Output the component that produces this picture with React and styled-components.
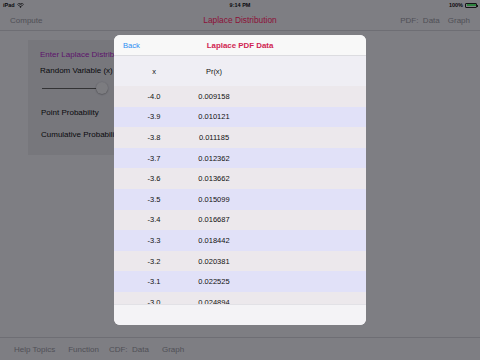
import React from "react";
import styled, { createGlobalStyle } from "styled-components";

const GlobalStyle = createGlobalStyle`
  html, body {
    margin: 0;
    padding: 0;
    background: #d2d2d8;
  }
  body {
    font-family: "Liberation Sans", Arial, sans-serif;
    -webkit-font-smoothing: antialiased;
  }
`;

const Screen = styled.div`
  position: relative;
  width: 480px;
  height: 360px;
  overflow: hidden;
  display: flex;
  flex-direction: column;
  background: #d2d2d8;
  color: #111;
`;

const StatusBar = styled.div`
  height: 10px;
  display: grid;
  grid-template-columns: 1fr auto 1fr;
  align-items: center;
  padding: 0 3px;
  font-size: 5.5px;
  font-weight: bold;
  .left { display: flex; align-items: center; gap: 2px; }
  .right { display: flex; align-items: center; justify-content: flex-end; gap: 2px; }
`;

const Battery = styled.span`
  display: inline-block;
  width: 12px;
  height: 5px;
  border: 0.6px solid #222;
  border-radius: 1px;
  padding: 0.5px;
  box-sizing: border-box;
  position: relative;
  &::before {
    content: "";
    display: block;
    width: 100%;
    height: 100%;
    background: #4cd964;
  }
  &::after {
    content: "";
    position: absolute;
    right: -2px;
    top: 1.2px;
    width: 1px;
    height: 2px;
    background: #222;
  }
`;

const NavBar = styled.div`
  height: 20px;
  display: grid;
  grid-template-columns: 1fr auto 1fr;
  align-items: center;
  padding: 0 10px;
  border-bottom: 1px solid #b8b8be;
  font-size: 8px;
  .left { color: #86868d; }
  .title { color: #e81c5a; font-size: 8.4px; }
  .right { display: flex; justify-content: flex-end; gap: 8px; color: #86868d; }
`;

const Content = styled.div`
  flex: 1;
  padding: 9px 0 0 28px;
`;

const Panel = styled.div`
  width: 200px;
  height: 115px;
  background: #c6c6cc;
  padding: 10px 12px;
  box-sizing: border-box;
  font-size: 8px;
`;

const Prompt = styled.div`
  color: #9c27b0;
  margin-bottom: 7px;
`;

const Label = styled.div`
  color: #111;
  margin: ${(p) => p.$m || "0"};
`;

const Slider = styled.div`
  position: relative;
  width: 66px;
  height: 12px;
  margin: 7px 0 14px 2px;
  &::before {
    content: "";
    position: absolute;
    left: 0;
    right: 6px;
    top: 5.5px;
    height: 1px;
    background: #555;
  }
`;

const Thumb = styled.span`
  position: absolute;
  left: 54px;
  top: 0;
  width: 12px;
  height: 12px;
  border-radius: 50%;
  background: #cfcfd3;
  box-shadow: 0 0.5px 1.5px rgba(0, 0, 0, 0.4);
`;

const Toolbar = styled.div`
  height: 22px;
  border-top: 1px solid #b8b8be;
  display: flex;
  align-items: center;
  padding: 0 14px;
  font-size: 8px;
  color: #86868d;
`;

const ToolItem = styled.span`
  margin-right: ${(p) => p.$gap || 0}px;
  white-space: nowrap;
`;

const Overlay = styled.div`
  position: absolute;
  inset: 0;
  background: rgba(0, 0, 5, 0.4);
`;

const Modal = styled.div`
  position: absolute;
  left: 114px;
  top: 35px;
  width: 252px;
  height: 290px;
  border-radius: 6px;
  overflow: hidden;
  background: #f4f3f6;
  display: flex;
  flex-direction: column;
`;

const ModalHeader = styled.div`
  height: 20px;
  display: grid;
  grid-template-columns: 1fr auto 1fr;
  align-items: center;
  padding: 0 9px;
  background: #f8f8f8;
  border-bottom: 1px solid #dcdce0;
  .back { color: #2a8cf2; font-size: 7.6px; }
  .title { color: #d01f52; font-size: 7.9px; font-weight: bold; }
`;

const Grid = styled.div`
  display: grid;
  grid-template-columns: 80px 40px;
  align-items: center;
  flex: none;
  height: ${(p) => p.$h}px;
  background: ${(p) => p.$bg};
  font-size: 7.5px;
  color: #111;
  span { text-align: center; white-space: nowrap; }
`;

const Rows = styled.div`
  height: 218px;
  overflow: hidden;
  flex: none;
`;

const Footer = styled.div`
  flex: 1;
  background: #f4f3f6;
  border-top: 1px solid #e2e1e6;
`;

const Wifi = () => (
  <svg width="7" height="5" viewBox="0 0 14 10">
    <path d="M7 10 L4.5 7.2 A3.6 3.6 0 0 1 9.5 7.2 Z" fill="#222" />
    <path d="M2.6 5.2 A6.4 6.4 0 0 1 11.4 5.2" stroke="#222" strokeWidth="1.6" fill="none" />
    <path d="M0.6 3 A9.2 9.2 0 0 1 13.4 3" stroke="#222" strokeWidth="1.6" fill="none" />
  </svg>
);

const data = [];
for (let i = 0; i < 14; i++) {
  const x = -4 + i * 0.1;
  data.push({ x: x.toFixed(1), p: (0.5 * Math.exp(-Math.abs(x))).toFixed(6) });
}

export default function App() {
  return (
    <Screen>
      <GlobalStyle />
      <StatusBar>
        <span className="left">iPad <Wifi /></span>
        <span>9:14 PM</span>
        <span className="right">100% <Battery /></span>
      </StatusBar>
      <NavBar>
        <span className="left">Compute</span>
        <span className="title">Laplace Distribution</span>
        <span className="right"><span>PDF:&nbsp; Data</span><span>Graph</span></span>
      </NavBar>
      <Content>
        <Panel>
          <Prompt>Enter Laplace Distribution Parameters</Prompt>
          <Label>Random Variable (x)</Label>
          <Slider><Thumb /></Slider>
          <Label $m="0 0 13px 1px">Point Probability</Label>
          <Label $m="0 0 0 1px">Cumulative Probability</Label>
        </Panel>
      </Content>
      <Toolbar>
        <ToolItem $gap={13}>Help Topics</ToolItem>
        <ToolItem $gap={10}>Function</ToolItem>
        <ToolItem $gap={13}>CDF:&nbsp; Data</ToolItem>
        <ToolItem>Graph</ToolItem>
      </Toolbar>
      <Overlay />
      <Modal>
        <ModalHeader>
          <span className="back">Back</span>
          <span className="title">Laplace PDF Data</span>
          <span />
        </ModalHeader>
        <Grid $h={30} $bg="#efeef4">
          <span>x</span>
          <span>Pr(x)</span>
        </Grid>
        <Rows>
          {data.map((d, i) => (
            <Grid key={d.x} $h={20.6} $bg={i % 2 ? "#e1e1f8" : "#ece8ec"}>
              <span>{d.x}</span>
              <span>{d.p}</span>
            </Grid>
          ))}
        </Rows>
        <Footer />
      </Modal>
    </Screen>
  );
}
